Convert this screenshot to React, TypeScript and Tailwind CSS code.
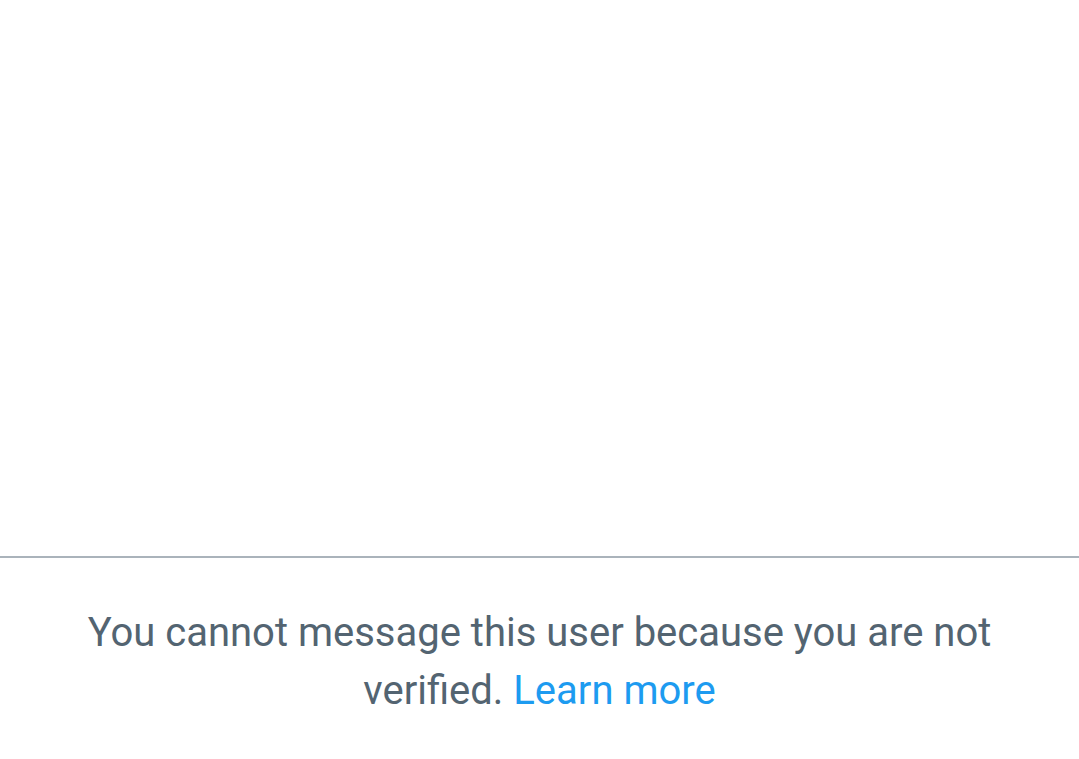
export default function App() {
  return (
    <div className="w-[1079px] h-[759px] bg-white flex flex-col" style={{ fontFamily: 'Roboto, "Noto Sans", sans-serif' }}>
      <div className="h-[556px]" />
      <div className="h-[2px] bg-[#aab3bb]" />
      <div className="pt-[46px] px-[60px] text-center text-[40px] leading-[58px] text-[#536471]">
        You cannot message this user because you are not verified.{" "}
        <span className="text-[#1d9bf0]">Learn more</span>
      </div>
    </div>
  );
}
